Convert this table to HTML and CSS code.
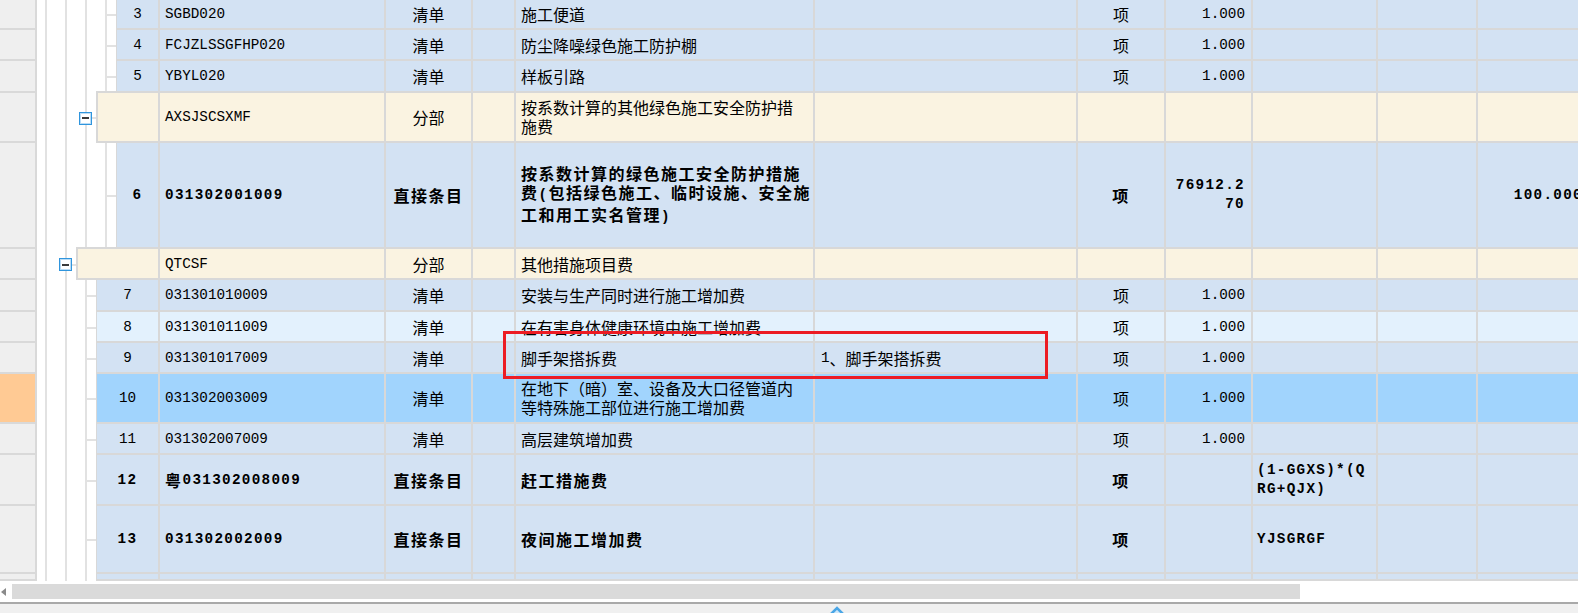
FILE: index.html
```html
<!DOCTYPE html>
<html lang="zh-CN">
<head>
<meta charset="utf-8">
<title>措施项目</title>
<link rel="stylesheet" href="styles.css">
</head>
<body>
<div class="page">
  <div class="grid">
    <div class="row blue d2 h30">
      <div class="lp"></div>
      <div class="gut"><span class="conn"></span></div>
      <div class="c num m">3</div>
      <div class="c code m">SGBD020</div>
      <div class="c type">清单</div>
      <div class="c nar"></div>
      <div class="c name">施工便道</div>
      <div class="c desc"></div>
      <div class="c unit">项</div>
      <div class="c qty m">1.000</div>
      <div class="c fml"></div>
      <div class="c c10"></div>
      <div class="c c11"></div>
    </div>
    <div class="row blue d2 h31">
      <div class="lp"></div>
      <div class="gut"><span class="conn"></span></div>
      <div class="c num m">4</div>
      <div class="c code m">FCJZLSSGFHP020</div>
      <div class="c type">清单</div>
      <div class="c nar"></div>
      <div class="c name">防尘降噪绿色施工防护棚</div>
      <div class="c desc"></div>
      <div class="c unit">项</div>
      <div class="c qty m">1.000</div>
      <div class="c fml"></div>
      <div class="c c10"></div>
      <div class="c c11"></div>
    </div>
    <div class="row blue d2 h32">
      <div class="lp"></div>
      <div class="gut"><span class="conn"></span></div>
      <div class="c num m">5</div>
      <div class="c code m">YBYL020</div>
      <div class="c type">清单</div>
      <div class="c nar"></div>
      <div class="c name">样板引路</div>
      <div class="c desc"></div>
      <div class="c unit">项</div>
      <div class="c qty m">1.000</div>
      <div class="c fml"></div>
      <div class="c c10"></div>
      <div class="c c11"></div>
    </div>
    <div class="row grp d1 h50">
      <div class="lp"></div>
      <div class="gut"><span class="tog"></span><span class="conn"></span></div>
      <div class="c num"></div>
      <div class="c code m">AXSJSCSXMF</div>
      <div class="c type">分部</div>
      <div class="c nar"></div>
      <div class="c name"><span class="ml">按系数计算的其他绿色施工安全防护措<br>施费</span></div>
      <div class="c desc"></div>
      <div class="c unit"></div>
      <div class="c qty"></div>
      <div class="c fml"></div>
      <div class="c c10"></div>
      <div class="c c11"></div>
    </div>
    <div class="row blue bold d2 h106">
      <div class="lp"></div>
      <div class="gut"><span class="conn"></span></div>
      <div class="c num m">6</div>
      <div class="c code m">031302001009</div>
      <div class="c type">直接条目</div>
      <div class="c nar"></div>
      <div class="c name"><span class="ml">按系数计算的绿色施工安全防护措施<br>费<span class="m">(</span>包括绿色施工、临时设施、安全施<br>工和用工实名管理<span class="m">)</span></span></div>
      <div class="c desc"></div>
      <div class="c unit">项</div>
      <div class="c qty m"><span class="ml">76912.2<br>70</span></div>
      <div class="c fml"></div>
      <div class="c c10"></div>
      <div class="c c11 m">100.000</div>
    </div>
    <div class="row grp d0 h31">
      <div class="lp"></div>
      <div class="gut"><span class="tog"></span><span class="conn"></span></div>
      <div class="c num"></div>
      <div class="c code m">QTCSF</div>
      <div class="c type">分部</div>
      <div class="c nar"></div>
      <div class="c name">其他措施项目费</div>
      <div class="c desc"></div>
      <div class="c unit"></div>
      <div class="c qty"></div>
      <div class="c fml"></div>
      <div class="c c10"></div>
      <div class="c c11"></div>
    </div>
    <div class="row blue d1 h32">
      <div class="lp"></div>
      <div class="gut"><span class="conn"></span></div>
      <div class="c num m">7</div>
      <div class="c code m">031301010009</div>
      <div class="c type">清单</div>
      <div class="c nar"></div>
      <div class="c name">安装与生产同时进行施工增加费</div>
      <div class="c desc"></div>
      <div class="c unit">项</div>
      <div class="c qty m">1.000</div>
      <div class="c fml"></div>
      <div class="c c10"></div>
      <div class="c c11"></div>
    </div>
    <div class="row light d1 h31">
      <div class="lp"></div>
      <div class="gut"><span class="conn"></span></div>
      <div class="c num m">8</div>
      <div class="c code m">031301011009</div>
      <div class="c type">清单</div>
      <div class="c nar"></div>
      <div class="c name">在有害身体健康环境中施工增加费</div>
      <div class="c desc"></div>
      <div class="c unit">项</div>
      <div class="c qty m">1.000</div>
      <div class="c fml"></div>
      <div class="c c10"></div>
      <div class="c c11"></div>
    </div>
    <div class="row blue d1 h31">
      <div class="lp"></div>
      <div class="gut"><span class="conn"></span></div>
      <div class="c num m">9</div>
      <div class="c code m">031301017009</div>
      <div class="c type">清单</div>
      <div class="c nar"></div>
      <div class="c name">脚手架搭拆费</div>
      <div class="c desc"><span class="m">1</span>、脚手架搭拆费</div>
      <div class="c unit">项</div>
      <div class="c qty m">1.000</div>
      <div class="c fml"></div>
      <div class="c c10"></div>
      <div class="c c11"></div>
    </div>
    <div class="row sel d1 h50">
      <div class="lp"></div>
      <div class="gut"><span class="conn"></span></div>
      <div class="c num m">10</div>
      <div class="c code m">031302003009</div>
      <div class="c type">清单</div>
      <div class="c nar"></div>
      <div class="c name"><span class="ml">在地下（暗）室、设备及大口径管道内<br>等特殊施工部位进行施工增加费</span></div>
      <div class="c desc"></div>
      <div class="c unit">项</div>
      <div class="c qty m">1.000</div>
      <div class="c fml"></div>
      <div class="c c10"></div>
      <div class="c c11"></div>
    </div>
    <div class="row blue d1 h31">
      <div class="lp"></div>
      <div class="gut"><span class="conn"></span></div>
      <div class="c num m">11</div>
      <div class="c code m">031302007009</div>
      <div class="c type">清单</div>
      <div class="c nar"></div>
      <div class="c name">高层建筑增加费</div>
      <div class="c desc"></div>
      <div class="c unit">项</div>
      <div class="c qty m">1.000</div>
      <div class="c fml"></div>
      <div class="c c10"></div>
      <div class="c c11"></div>
    </div>
    <div class="row blue bold d1 h51">
      <div class="lp"></div>
      <div class="gut"><span class="conn"></span></div>
      <div class="c num m">12</div>
      <div class="c code">粤<span class="m">031302008009</span></div>
      <div class="c type">直接条目</div>
      <div class="c nar"></div>
      <div class="c name">赶工措施费</div>
      <div class="c desc"></div>
      <div class="c unit">项</div>
      <div class="c qty"></div>
      <div class="c fml m"><span class="ml">(1-GGXS)*(Q<br>RG+QJX)</span></div>
      <div class="c c10"></div>
      <div class="c c11"></div>
    </div>
    <div class="row blue bold d1 h68">
      <div class="lp"></div>
      <div class="gut"><span class="conn"></span></div>
      <div class="c num m">13</div>
      <div class="c code m">031302002009</div>
      <div class="c type">直接条目</div>
      <div class="c nar"></div>
      <div class="c name">夜间施工增加费</div>
      <div class="c desc"></div>
      <div class="c unit">项</div>
      <div class="c qty"></div>
      <div class="c fml m">YJSGRGF</div>
      <div class="c c10"></div>
      <div class="c c11"></div>
    </div>
    <div class="row blue d1 last">
      <div class="lp"></div>
      <div class="gut"></div>
      <div class="c num"></div>
      <div class="c code"></div>
      <div class="c type"></div>
      <div class="c nar"></div>
      <div class="c name"></div>
      <div class="c desc"></div>
      <div class="c unit"></div>
      <div class="c qty"></div>
      <div class="c fml"></div>
      <div class="c c10"></div>
      <div class="c c11"></div>
    </div>
  </div>
  <div class="hbar">
    <span class="larr"></span>
    <div class="thumb"></div>
  </div>
  <div class="status">
    <svg class="caret" width="16" height="9" viewBox="0 0 16 9"><path d="M1 9 L8 2 L15 9" fill="#cfe8fa" stroke="#4aa6e6" stroke-width="2.6" stroke-linejoin="miter"/></svg>
  </div>
  <div class="hl"></div>
</div>
</body>
</html>
```

FILE: styles.css
```css
* {
  box-sizing: border-box;
  margin: 0;
  padding: 0;
}

html,
body {
  width: 1578px;
  height: 613px;
  overflow: hidden;
  background: #ffffff;
}

body {
  font-family: "Noto Sans CJK SC", "Liberation Sans", sans-serif;
  font-size: 16px;
  color: #000;
}

.page {
  position: relative;
  width: 1578px;
  height: 613px;
  display: flex;
  flex-direction: column;
}

.grid {
  height: 581px;
  flex: none;
  display: flex;
  flex-direction: column;
  overflow: hidden;
}

.row {
  display: flex;
  flex: none;
  width: 1600px;
}

.h30 { height: 30px; }
.h31 { height: 31px; }
.h32 { height: 32px; }
.h50 { height: 50px; }
.h51 { height: 51px; }
.h68 { height: 68px; }
.h106 { height: 106px; }
.row.last { flex: 1 1 auto; }

/* left frozen panel */
.lp {
  width: 37px;
  flex: none;
  background: #efefef;
  border-right: 2px solid #d9d9d9;
  border-bottom: 2px solid #d9d9d9;
}

.sel .lp {
  background: #ffca94;
}

/* tree gutter */
.gut {
  flex: none;
  display: flex;
  align-items: center;
  justify-content: flex-end;
  background-color: #ffffff;
  background-image: repeating-linear-gradient(90deg, transparent 0 8px, #e2e2e2 8px 10px, transparent 10px 20px);
}

.d2 .gut { width: 79px; }
.d1 .gut { width: 59px; }
.d0 .gut { width: 39px; }

.conn {
  width: 9px;
  height: 2px;
  background: #e2e2e2;
}

.grp .conn {
  width: 4px;
}

.tog {
  width: 13px;
  height: 13px;
  flex: none;
  border: 1px solid #2f95dd;
  box-shadow: inset 0 0 0 1px #b9dcf6;
  background: #ffffff;
  display: flex;
  align-items: center;
  justify-content: center;
}

.tog::before {
  content: "";
  width: 7px;
  height: 2px;
  background: #3a3a3a;
}

/* cells */
.c {
  flex: none;
  display: flex;
  align-items: center;
  white-space: nowrap;
  overflow: hidden;
  border-right: 2px solid #d8d8d8;
  border-bottom: 2px solid #d8d8d8;
  padding: 0 5px;
}

.blue .c { background: #d3e2f3; }
.light .c { background: #e3f1fd; }
.sel .c { background: #a1d4fd; }
.grp .c { background: #faf3e1; }

.num {
  justify-content: center;
  border-left: 1px solid #d8d8d8;
  padding: 0;
}

.grp .num {
  border-left-width: 2px;
  box-shadow: 0 -2px 0 0 #d8d8d8;
}

.d2 .num { width: 44px; }
.d1 .num { width: 64px; }
.d0 .num { width: 84px; }

.code { width: 226px; padding-left: 5px; }
.type { width: 87px; justify-content: center; padding: 0; }
.nar { width: 43px; }
.name { width: 299px; padding-left: 5px; }
.desc { width: 263px; padding-left: 6px; }
.unit { width: 88px; justify-content: center; padding: 0; }
.qty { width: 87px; justify-content: flex-end; padding-right: 6px; }
.fml { width: 125px; padding-left: 4px; }
.c10 { width: 100px; }
.c11 { width: 113px; justify-content: flex-end; padding-right: 6px; }

.ml {
  display: block;
  line-height: 19px;
}

.qty .ml {
  text-align: right;
}

.m {
  font-family: "Liberation Mono", "DejaVu Sans Mono", monospace;
  font-size: 14.3px;
}

.bold {
  font-weight: 700;
}

.bold .c {
  letter-spacing: 1.5px;
}

.bold .m {
  letter-spacing: 1.3px;
}

/* horizontal scrollbar */
.hbar {
  height: 21px;
  flex: none;
  display: flex;
  align-items: center;
  background: #ffffff;
}

.larr {
  width: 0;
  height: 0;
  margin-left: 1px;
  border-right: 5px solid #8a8a8a;
  border-top: 4.5px solid transparent;
  border-bottom: 4.5px solid transparent;
}

.thumb {
  margin-left: 6px;
  width: 1288px;
  height: 15px;
  background: #dadada;
}

/* status strip */
.status {
  flex: 1 1 auto;
  border-top: 2px solid #a9a9a9;
  background: #f0f0f0;
  padding-left: 829px;
  overflow: hidden;
}

.caret {
  display: block;
  margin-top: 2px;
}

/* red annotation frame */
.hl {
  position: absolute;
  left: 503px;
  top: 331px;
  width: 545px;
  height: 48px;
  border: 3px solid #ec1c24;
}
```
